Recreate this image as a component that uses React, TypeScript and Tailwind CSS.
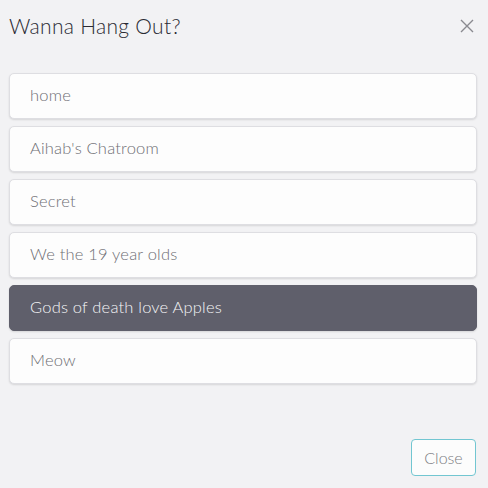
import React, { useState } from 'react';

const rooms = ['home', "Aihab's Chatroom", 'Secret', 'We the 19 year olds', 'Gods of death love Apples', 'Meow'];

const App = () => {
  const [selected, setSelected] = useState('Gods of death love Apples');

  return (
    <div className="w-[488px] h-[488px] bg-[#f2f2f4] flex flex-col font-['Lato',sans-serif] font-light">
      <div className="flex items-center justify-between pl-[9px] pr-[14px] h-[52px]">
        <h1 className="text-[21px] text-[#2a2a33] tracking-[0.3px]">Wanna Hang Out?</h1>
        <button className="text-[#8a8a90]">
          <svg width="14" height="14" viewBox="0 0 14 14" fill="none" stroke="currentColor" strokeWidth="1.4">
            <path d="M1 1L13 13M13 1L1 13" />
          </svg>
        </button>
      </div>
      <div className="flex flex-col gap-[7px] pl-[9px] pr-[11px] pt-[21px]">
        {rooms.map((room) => (
          <button
            key={room}
            onClick={() => setSelected(room)}
            className={`h-[46px] w-full text-left pl-[20px] pb-[1px] rounded-[5px] text-[16.5px] tracking-[0.2px] border shadow-[0_1px_2px_rgba(0,0,0,0.12)] ${
              selected === room
                ? 'bg-[#5f5f6b] border-[#5f5f6b] text-[#f5f5f7]'
                : 'bg-[#fdfdfd] border-[#dedee2] text-[#6e6e74]'
            }`}
          >
            {room}
          </button>
        ))}
      </div>
      <div className="mt-auto flex justify-end pr-[12px] pb-[12px]">
        <button className="h-[37px] w-[65px] rounded-[4px] border border-[#72c6d1] bg-[#fcfcfc] text-[16px] text-[#7d7d83]">
          Close
        </button>
      </div>
    </div>
  );
};

export default App;
